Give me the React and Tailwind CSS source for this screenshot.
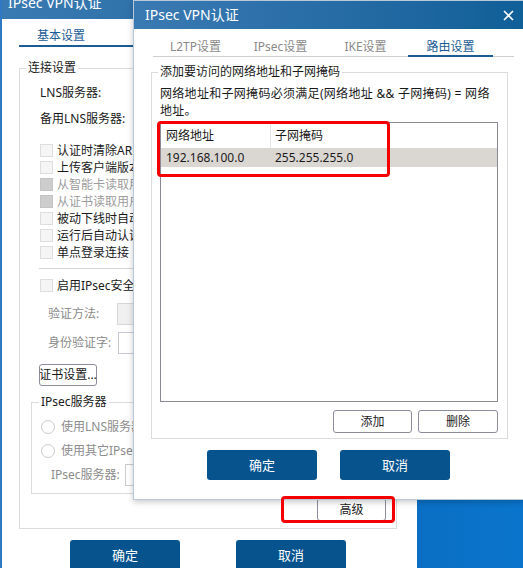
import React from 'react';

const FONT = "font-['Noto_Sans','Noto_Sans_CJK_SC',sans-serif]";

function Check({ label, disabled }) {
  return (
    <div className="flex h-[17px] items-center gap-[4px] whitespace-nowrap">
      <span
        className={
          disabled
            ? 'h-[13px] w-[13px] shrink-0 border border-[#c4c4c4] bg-[#cdcdcd]'
            : 'h-[13px] w-[13px] shrink-0 border border-[#dedede] bg-[#f5f5f5]'
        }
      />
      <span className={disabled ? 'text-[#9c9c9c]' : 'text-[#1a1a1a]'}>{label}</span>
    </div>
  );
}

function Radio({ label }) {
  return (
    <div className="flex h-[24px] items-center gap-[6px] whitespace-nowrap">
      <span className="h-[14px] w-[14px] shrink-0 rounded-full border border-[#cccccc] bg-white" />
      <span className="text-[#8c8c8c]">{label}</span>
    </div>
  );
}

function GrayButton({ className, children }) {
  return (
    <button className={`flex items-center justify-center whitespace-nowrap rounded-[3px] border border-[#8e8c9c] bg-white text-[#1a1a1a] ${className}`}>
      {children}
    </button>
  );
}

function BlueButton({ children }) {
  return (
    <button className="flex h-[30px] w-[110px] items-center justify-center rounded-[3px] bg-[#07538d] text-[13px] text-white">
      {children}
    </button>
  );
}

function BackWindow() {
  return (
    <div className="absolute left-0 top-[-13px] h-[600px] w-[417px] border-l-[2px] border-[#2f78c4] bg-white">
      {/* 标题栏 */}
      <div className="flex h-[32px] items-center bg-gradient-to-r from-[#3a7ab3] to-[#176198] pl-[6px] text-[14px] text-white">
        IPsec VPN认证
      </div>

      {/* Tab */}
      <div className="ml-[17px] flex border-b border-[#d4d4d4]">
        <div className="-mb-px w-[120px] border-b-2 border-[#1b5c94] pb-[1px] pl-[18px] pt-[9px] text-[#1b5c94]">基本设置</div>
      </div>

      {/* 连接设置 */}
      <div className="ml-[17px] mt-[21px] w-[378px] border border-[#dcdcdc]">
        <div className="-mt-[9px] ml-[6px] w-fit bg-white px-[2px]">连接设置</div>
        <div className="pb-[7px] pl-[20px] pr-[10px]">
          <div className="mt-[4px] flex h-[26px] items-center">LNS服务器:</div>
          <div className="flex h-[26px] items-center">备用LNS服务器:</div>

          <div className="mt-[10px]">
            <Check label="认证时清除ARP缓存" />
            <Check label="上传客户端版本信息" />
            <Check label="从智能卡读取用户名" disabled />
            <Check label="从证书读取用户名" disabled />
            <Check label="被动下线时自动重连" />
            <Check label="运行后自动认证" />
            <Check label="单点登录连接" />
          </div>
          <div className="-ml-px mt-[7px] h-px w-[356px] bg-[#d4d4d4]" />
          <div className="mt-[8px]">
            <Check label="启用IPsec安全连接" />
          </div>

          <div className="mt-[9px] flex h-[22px] items-center">
            <span className="w-[77px] pl-[8px] text-[#8a8a8a]">验证方法:</span>
            <div className="h-[22px] w-[200px] border border-[#d8d8d8] bg-[#f0f0f0]" />
          </div>
          <div className="mt-[7px] flex h-[22px] items-center">
            <span className="w-[78px] pl-[8px] text-[#8a8a8a]">身份验证字:</span>
            <div className="h-[22px] w-[200px] border border-[#cbc6d6] bg-white" />
          </div>

          <GrayButton className="-ml-px mt-[10px] h-[22px] w-[58px]">证书设置...</GrayButton>

          {/* IPsec服务器 */}
          <div className="-ml-[9px] mt-[16px] w-[360px] border border-[#dcdcdc]">
            <div className="-mt-[9px] ml-[7px] w-fit bg-white px-[2px]">IPsec服务器</div>
            <div className="pb-[7px] pl-[9px]">
              <div className="mt-[5px]">
                <Radio label="使用LNS服务器地址" />
                <Radio label="使用其它IPsec服务器" />
              </div>
              <div className="mt-[1px] flex h-[22px] items-center">
                <span className="w-[84px] pl-[10px] text-[#8c8c8c]">IPsec服务器:</span>
                <div className="h-[22px] w-[200px] border border-[#cccccc] bg-white" />
              </div>
            </div>
          </div>

          <div className="mt-[4px] flex justify-end">
            <GrayButton className="h-[23px] w-[69px]">高级</GrayButton>
          </div>
        </div>
      </div>

      <div className="mt-[11px] flex gap-[56px] pl-[68px]">
        <BlueButton>确定</BlueButton>
        <BlueButton>取消</BlueButton>
      </div>
    </div>
  );
}

function FrontWindow() {
  const tabs = ['L2TP设置', 'IPsec设置', 'IKE设置', '路由设置'];
  return (
    <div className="absolute left-[133px] top-0 h-[500px] w-[392px] border border-[#b7c9da] bg-white shadow-[0_2px_6px_rgba(0,0,0,0.22)]">
      {/* 标题栏 */}
      <div className="flex h-[28px] items-center justify-between bg-gradient-to-r from-[#3a7ab3] to-[#0f5f98] pl-[11px] pr-[10px] text-[14px] text-white">
        <span>IPsec VPN认证</span>
        <svg width="11" height="11" viewBox="0 0 11 11">
          <path d="M1 1 L10 10 M10 1 L1 10" stroke="white" strokeWidth="1.6" />
        </svg>
      </div>

      {/* Tabs */}
      <div className="ml-[19px] mr-[10px] flex border-b border-[#cfcfcf]">
        {tabs.map((t, i) => (
          <div
            key={t}
            className={
              i === 3
                ? '-mb-px w-[85px] border-b-2 border-[#1b5c94] pt-[10px] text-center text-[#1b5c94]'
                : '-mb-px w-[85px] border-b-2 border-transparent pt-[10px] text-center text-[#8a8a8a]'
            }
          >
            {t}
          </div>
        ))}
      </div>

      {/* 路由分组 */}
      <div className="ml-[17px] mt-[15px] w-[357px] border border-[#dcdcdc]">
        <div className="-mt-[9px] ml-[6px] w-fit bg-white px-[2px]">添加要访问的网络地址和子网掩码</div>
        <div className="pb-[5px] pl-[8px] pr-[8px]">
          <div className="mt-[5px] leading-[17px] tracking-[0.3px]">
            网络地址和子网掩码必须满足(网络地址 &amp;&amp; 子网掩码) = 网络
            <br />
            地址。
          </div>

          <div className="mt-[3px] h-[280px] w-[338px] border border-[#8c8a96]">
            <div className="flex h-[25px] items-center">
              <div className="flex h-full w-[110px] items-center border-r border-[#e6e6e6] pl-[5px]">网络地址</div>
              <div className="pl-[4px]">子网掩码</div>
            </div>
            <div className="flex h-[19px] items-center bg-[#dad7d2]">
              <div className="w-[110px] pl-[5px]">192.168.100.0</div>
              <div className="pl-[4px]">255.255.255.0</div>
            </div>
          </div>

          <div className="mt-[8px] flex justify-end gap-[6px] pr-[1px]">
            <GrayButton className="h-[23px] w-[79px]">添加</GrayButton>
            <GrayButton className="h-[23px] w-[80px]">删除</GrayButton>
          </div>
        </div>
      </div>

      <div className="mt-[11px] flex gap-[23px] pl-[73px]">
        <BlueButton>确定</BlueButton>
        <BlueButton>取消</BlueButton>
      </div>
    </div>
  );
}

export default function App() {
  return (
    <div className={`relative h-[568px] w-[523px] overflow-hidden bg-gradient-to-r from-[#0a5da6] to-[#0a74cc] text-[12px] leading-[16px] text-[#1a1a1a] ${FONT}`}>
      <BackWindow />
      <FrontWindow />
      {/* 标注红框 */}
      <div className="pointer-events-none absolute left-[157px] top-[121px] h-[56px] w-[233px] rounded-[4px] border-[3px] border-[#f40000]" />
      <div className="pointer-events-none absolute left-[281px] top-[496px] h-[27px] w-[114px] rounded-[4px] border-[3px] border-[#f40000]" />
    </div>
  );
}
